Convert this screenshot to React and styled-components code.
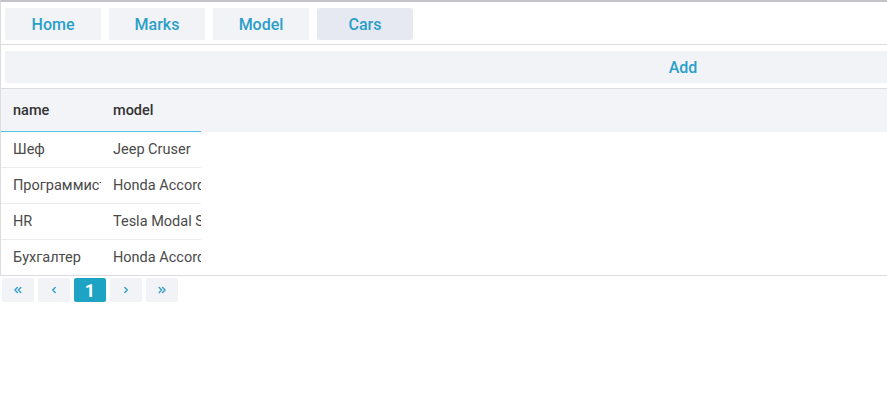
import styled, { createGlobalStyle } from 'styled-components';

const GlobalStyle = createGlobalStyle`
  html, body {
    margin: 0;
    padding: 0;
    overflow: hidden;
    background: #fff;
    font-family: Roboto, "Noto Sans", sans-serif;
  }
`;

const Page = styled.div`
  width: 1366px;
`;

const Frame = styled.div`
  border-top: 2px solid #c3c3c7;
  border-left: 1px solid #dcdcdf;
  border-bottom: 1px solid #dcdcdf;
`;

const Nav = styled.nav`
  display: flex;
  gap: 8px;
  padding: 6px 4px 4px;
  border-bottom: 1px solid #dcdcdf;
`;

const NavButton = styled.button`
  width: 96px;
  height: 32px;
  border: none;
  border-radius: 2px;
  background: ${(p) => (p.$active ? '#e6e9f1' : '#f2f3f7')};
  color: #2a9fc9;
  font-family: Roboto, sans-serif;
  font-size: 16px;
  font-weight: 500;
  cursor: pointer;
`;

const Toolbar = styled.div`
  padding: 6px 0 5px 4px;
  border-bottom: 1px solid #dcdcdf;
`;

const AddButton = styled.button`
  display: block;
  width: 1356px;
  height: 32px;
  border: none;
  border-radius: 2px;
  background: #f2f3f7;
  color: #2a9fc9;
  font-family: Roboto, sans-serif;
  font-size: 16px;
  font-weight: 500;
`;

const HeadRow = styled.div`
  display: flex;
  background: #f3f4f8;
  height: 43px;
`;

const Row = styled.div`
  display: flex;
  height: ${(p) => (p.$last ? '35px' : '36px')};
`;

const Cell = styled.div`
  width: 100px;
  box-sizing: border-box;
  padding: 0 0 0 12px;
  display: flex;
  align-items: center;
  white-space: nowrap;
  overflow: hidden;
  font-size: 14.5px;
  color: ${(p) => (p.$head ? '#333' : '#4a4a4a')};
  font-weight: ${(p) => (p.$head ? 500 : 400)};
  border-bottom: ${(p) => (p.$head ? '1px solid #4cc6e4' : p.$last ? 'none' : '1px solid #ececee')};
`;

const Pager = styled.div`
  display: flex;
  gap: 4px;
  padding: 2px 0 0 2px;
`;

const PageButton = styled.button`
  width: 32px;
  height: 24px;
  border: none;
  border-radius: 2px;
  padding: 0;
  display: flex;
  align-items: center;
  justify-content: center;
  background: ${(p) => (p.$active ? '#1ea3c5' : '#f2f3f7')};
  color: ${(p) => (p.$active ? '#fff' : '#3a9fc9')};
  font-family: Roboto, sans-serif;
  font-size: 18px;
  font-weight: 700;
`;

const Chevron = ({ dir = 1, double }) => (
  <svg width="12" height="12" viewBox="0 0 12 12" fill="none" stroke="currentColor" strokeWidth="1.5" strokeLinecap="round" strokeLinejoin="round">
    <g transform={dir < 0 ? 'translate(12,0) scale(-1,1)' : undefined}>
      {double ? (
        <>
          <path d="M3.2 3.5l2.5 2.5-2.5 2.5" />
          <path d="M6.6 3.5l2.5 2.5-2.5 2.5" />
        </>
      ) : (
        <path d="M4.8 3.5l2.5 2.5-2.5 2.5" />
      )}
    </g>
  </svg>
);

const rows = [
  ['Шеф', 'Jeep Cruser'],
  ['Программист', 'Honda Accord'],
  ['HR', 'Tesla Modal S'],
  ['Бухгалтер', 'Honda Accord'],
];

const App = () => (
  <Page>
    <GlobalStyle />
    <Frame>
      <Nav>
        <NavButton>Home</NavButton>
        <NavButton>Marks</NavButton>
        <NavButton>Model</NavButton>
        <NavButton $active>Cars</NavButton>
      </Nav>
      <Toolbar>
        <AddButton>Add</AddButton>
      </Toolbar>
      <HeadRow>
        <Cell $head>name</Cell>
        <Cell $head>model</Cell>
      </HeadRow>
      {rows.map(([name, model], i) => {
        const last = i === rows.length - 1;
        return (
          <Row key={i} $last={last}>
            <Cell $last={last}>{name}</Cell>
            <Cell $last={last}>{model}</Cell>
          </Row>
        );
      })}
    </Frame>
    <Pager>
      <PageButton><Chevron dir={-1} double /></PageButton>
      <PageButton><Chevron dir={-1} /></PageButton>
      <PageButton $active>1</PageButton>
      <PageButton><Chevron /></PageButton>
      <PageButton><Chevron double /></PageButton>
    </Pager>
  </Page>
);

export default App;
